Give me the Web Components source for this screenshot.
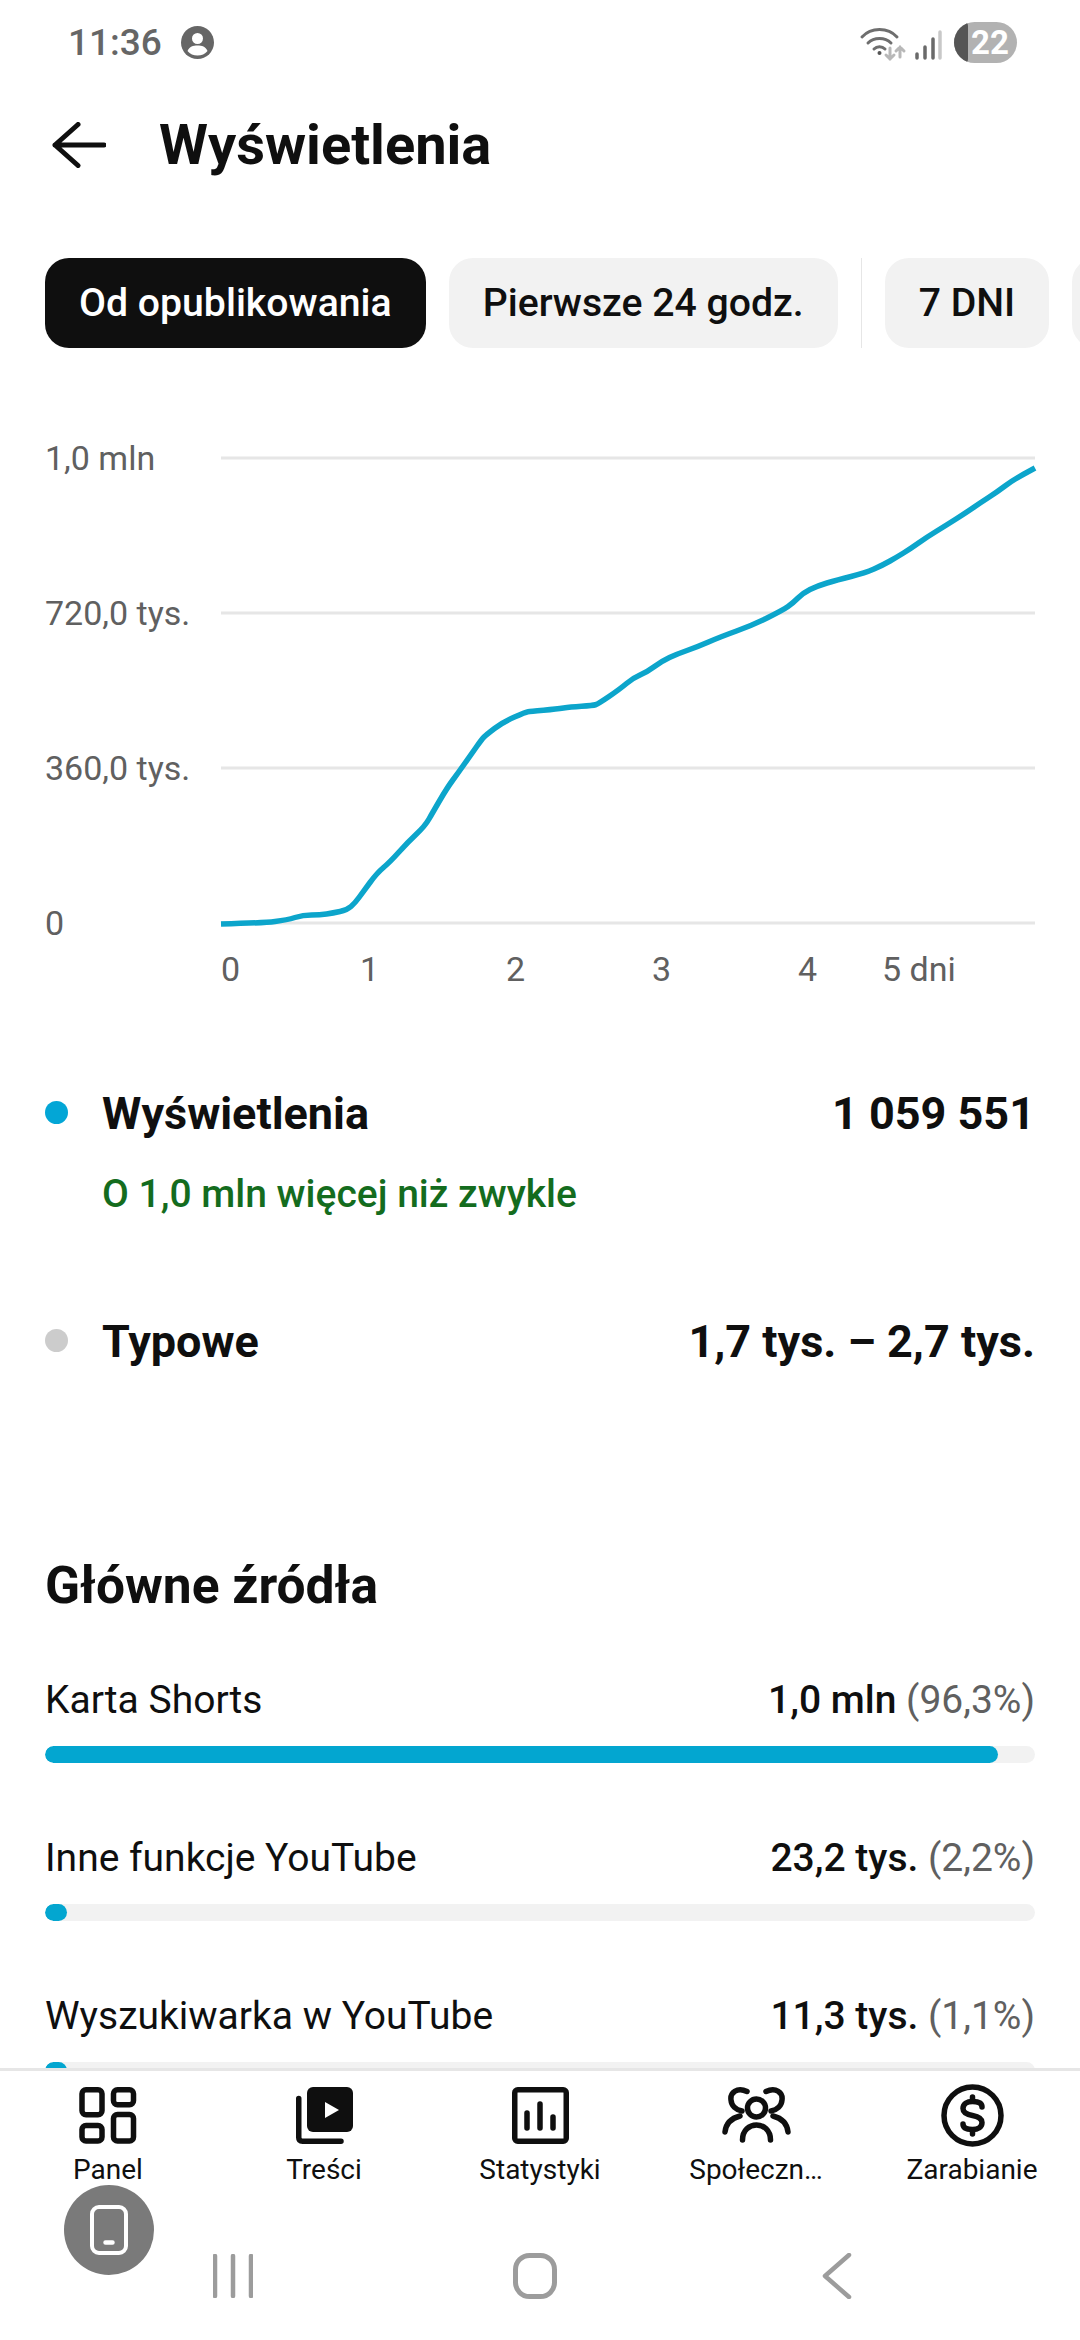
<!DOCTYPE html>
<html lang="pl">
<head>
<meta charset="utf-8">
<title>Wyświetlenia</title>
<style>
  html, body { margin: 0; padding: 0; background: #fff; }
  body { font-family: Roboto, "Noto Sans", sans-serif; color: #0f0f0f; }
</style>
</head>
<body>
<yt-app>
  <status-bar></status-bar>
  <page-header>Wyświetlenia</page-header>
  <chip-row>
    <filter-chip active>Od opublikowania</filter-chip>
    <filter-chip>Pierwsze 24 godz.</filter-chip>
    <chip-divider></chip-divider>
    <filter-chip>7 DNI</filter-chip>
    <filter-chip></filter-chip>
  </chip-row>
  <content-area>
    <views-chart></views-chart>
    <stat-row color="#03a6d6" label="Wyświetlenia" value="1 059 551" style="margin-top:74px">O 1,0 mln więcej niż zwykle</stat-row>
    <stat-row color="#cccccc" label="Typowe" value="1,7 tys. – 2,7 tys." style="margin-top:91px"></stat-row>
    <section-title>Główne źródła</section-title>
    <source-row label="Karta Shorts" value="1,0 mln" share="(96,3%)" fill="96.3"></source-row>
    <source-row label="Inne funkcje YouTube" value="23,2 tys." share="(2,2%)" fill="2.2"></source-row>
    <source-row label="Wyszukiwarka w YouTube" value="11,3 tys." share="(1,1%)" fill="1.1"></source-row>
  </content-area>
  <bottom-nav>
    <nav-item label="Panel">
      <svg width="58" height="57" viewBox="0 0 58 57" fill="none" stroke="#0f0f0f" stroke-width="5.5">
        <rect x="3" y="2.75" width="20" height="25" rx="4"/>
        <rect x="34.5" y="2.75" width="20" height="15" rx="4"/>
        <rect x="3" y="38.5" width="20" height="15.5" rx="4"/>
        <rect x="34.5" y="27.5" width="20" height="26.5" rx="4"/>
      </svg>
    </nav-item>
    <nav-item label="Treści">
      <svg width="57" height="57" viewBox="0 0 57 57" fill="none">
        <rect x="11" y="0" width="46" height="45" rx="6" fill="#0f0f0f"/>
        <path d="M29 15 43 23 29 31Z" fill="#fff"/>
        <path d="M2.75 11.5V50.5q0 3.75 3.75 3.75H45" stroke="#0f0f0f" stroke-width="5.5" stroke-linecap="round"/>
      </svg>
    </nav-item>
    <nav-item label="Statystyki">
      <svg width="57" height="57" viewBox="0 0 57 57" fill="none" stroke="#0f0f0f" stroke-linecap="round">
        <rect x="2.75" y="2.75" width="51.5" height="51.5" rx="3" stroke-width="5.5"/>
        <path d="M15 26V41M28 17V41M41 30V41" stroke-width="5.5"/>
      </svg>
    </nav-item>
    <nav-item label="Społeczn…">
      <svg width="73" height="60" viewBox="0 0 73 60" fill="none" stroke="#0f0f0f" stroke-width="5.5" stroke-linecap="round">
        <circle cx="36.5" cy="23" r="9"/>
        <path d="M22.5 55C22.5 35 50.5 35 50.5 55"/>
        <path d="M5 47C6 38 12 33 20 31M68 47C67 38 61 33 53 31"/>
        <path d="M27 6.5C17 1.5 10 8 11 15 11.5 21 16 25 22 26M46 6.5C56 1.5 63 8 62 15 61.5 21 57 25 51 26"/>
      </svg>
    </nav-item>
    <nav-item label="Zarabianie">
      <svg width="63" height="63" viewBox="0 0 63 63" fill="none" stroke="#0f0f0f" stroke-width="5.5" stroke-linecap="round">
        <circle cx="31.5" cy="31.5" r="28.5"/>
        <path d="M41 23C41 19 37 17.5 31.5 17.5 26 17.5 22 20 22 24.5 22 29 26 30.5 31.5 31.5 37 32.5 41 34 41 38.5 41 43 37 45.5 31.5 45.5 26 45.5 22 44 22 40"/>
        <path d="M31.5 13V17M31.5 46V50"/>
      </svg>
    </nav-item>
  </bottom-nav>
  <system-nav></system-nav>
  <float-button></float-button>
</yt-app>

<script>
class YtApp extends HTMLElement {
  constructor() {
    super();
    this.attachShadow({ mode: 'open' }).innerHTML = `
      <style>
        :host { display: flex; flex-direction: column; position: relative; width: 1080px; height: 2340px; overflow: hidden; background: #fff; }
      </style>
      <slot></slot>`;
  }
}

class StatusBar extends HTMLElement {
  constructor() {
    super();
    this.attachShadow({ mode: 'open' }).innerHTML = `
      <style>
        :host { display: flex; align-items: center; height: 84px; padding: 0 63px 0 68px; color: #666; font-size: 37px; font-weight: 500; flex: none; }
        .avatar { margin-left: 19px; }
        .signal { margin-left: auto; }
        .battery { position: relative; overflow: hidden; width: 63px; height: 41px; margin-left: 9px; border-radius: 21px; background: #b2b2b2; color: #fff; font-size: 33px; font-weight: 700; line-height: 41px; text-align: center; text-indent: 9px; }
        .battery::before { content: ''; position: absolute; left: 0; top: 0; width: 14px; height: 41px; background: #555; border-radius: 0 4px 4px 0; }
      </style>
      <span>11:36</span>
      <svg class="avatar" width="33" height="33" viewBox="0 0 33 33">
        <circle cx="16.5" cy="16.5" r="16.5" fill="#666"/>
        <circle cx="16.5" cy="12.5" r="5.5" fill="#fff"/>
        <path d="M6.5 25C8.5 20.5 12 19.5 16.5 19.5S24.5 20.5 26.5 25C24 28 20.5 29.5 16.5 29.5S9 28 6.5 25Z" fill="#fff"/>
      </svg>
      <svg class="signal" width="88" height="40" viewBox="855 20 88 40" fill="none" stroke-linecap="round">
        <path d="M860 35C869 25 886 25 895 35M866 41C872 35 883 35 889 41M872 47C875 44 880 44 883 47" stroke="#6e6e6e" stroke-width="3"/>
        <circle cx="877.5" cy="51" r="2" fill="#555"/>
        <path d="M888 46V57M884 53 888 57 892 53" stroke="#b8b8b8" stroke-width="3"/>
        <path d="M898 55V45M894 49 898 45 902 49" stroke="#b8b8b8" stroke-width="3"/>
        <path d="M915 52V56M923 45V56M931 37V56" stroke="#6a6a6a" stroke-width="3.5"/>
        <path d="M938 30V56" stroke="#c8c8c8" stroke-width="3.5"/>
      </svg>
      <span class="battery">22</span>`;
  }
}

class PageHeader extends HTMLElement {
  constructor() {
    super();
    this.attachShadow({ mode: 'open' }).innerHTML = `
      <style>
        :host { display: flex; align-items: center; height: 122px; padding-left: 52px; flex: none; }
        svg { flex: none; }
        h1 { margin: 0 0 0 53px; font-size: 56px; font-weight: 700; line-height: 60px; }
      </style>
      <svg width="54" height="46" viewBox="0 0 54 46" fill="none" stroke="#0f0f0f" stroke-width="5" stroke-linecap="round" stroke-linejoin="round">
        <path d="M26 2.5 3 23 26 43.5M3 23H52"/>
      </svg>
      <h1><slot></slot></h1>`;
  }
}

class ChipRow extends HTMLElement {
  constructor() {
    super();
    this.attachShadow({ mode: 'open' }).innerHTML = `
      <style>
        :host { display: flex; align-items: stretch; gap: 23px; height: 90px; margin-top: 52px; padding-left: 45px; overflow: hidden; flex: none; }
      </style>
      <slot></slot>`;
  }
}

class FilterChip extends HTMLElement {
  constructor() {
    super();
    this.attachShadow({ mode: 'open' }).innerHTML = `
      <style>
        :host { display: flex; align-items: center; flex: none; min-width: 100px; padding: 0 34px; box-sizing: border-box; border-radius: 24px; background: #f2f2f2; color: #0f0f0f; font-size: 39.2px; font-weight: 500; }
        :host([active]) { background: #0f0f0f; color: #fff; }
      </style>
      <slot></slot>`;
  }
}

class ChipDivider extends HTMLElement {
  constructor() {
    super();
    this.attachShadow({ mode: 'open' }).innerHTML = `
      <style>
        :host { display: block; flex: none; width: 1px; background: #e6e6e6; }
      </style>`;
  }
}

class ContentArea extends HTMLElement {
  constructor() {
    super();
    this.attachShadow({ mode: 'open' }).innerHTML = `
      <style>
        :host { display: block; flex: 1; min-height: 0; overflow: hidden; }
      </style>
      <slot></slot>`;
  }
}

// traced off the reference, in page pixels
const curve = [[221,924],[263,923],[287,920],[303,915],[320,915],[333,913],[347,910],[355,903],[363,892],[377,873],[390,862],[408,842],[425,826],[433,812],[447,788],[458,773],[470,756],[482,739],[486,735],[503,722],[526,712],[530,711.5],[557,709],[570,707],[593,705.5],[598,704],[620,689],[633,678],[647,672],[662,661],[677,654],[697,647],[720,637],[753,625],[783,610],[793,603],[803,593],[817,586],[837,580],[865,573],[883,565],[897,557],[910,549],[927,537],[945,526],[967,512],[980,503],[997,492],[1013,480],[1035,468]];

// quadratic through the midpoints, so the trace doesn't look faceted
function smoothPath(points) {
  let d = `M${points[0][0]} ${points[0][1]}`;
  for (let i = 1; i < points.length - 1; i++) {
    const mx = (points[i][0] + points[i + 1][0]) / 2;
    const my = (points[i][1] + points[i + 1][1]) / 2;
    d += `Q${points[i][0]} ${points[i][1]} ${mx} ${my}`;
  }
  const last = points[points.length - 1];
  return `${d}L${last[0]} ${last[1]}`;
}

class ViewsChart extends HTMLElement {
  constructor() {
    super();
    const top = 348;
    const grid = [458, 613, 768, 923];
    const yLabels = ['1,0 mln', '720,0 tys.', '360,0 tys.', '0'];
    const xLabels = [[221, '0'], [360, '1'], [506, '2'], [652, '3'], [798, '4'], [882, '5 dni']];
    const lines = grid.map(y => `<line x1="221" x2="1035" y1="${y}" y2="${y}"/>`).join('');
    const ys = grid.map((y, i) => `<text x="45" y="${y + 12}">${yLabels[i]}</text>`).join('');
    const xs = xLabels.map(([x, t]) => `<text x="${x}" y="981">${t}</text>`).join('');
    this.attachShadow({ mode: 'open' }).innerHTML = `
      <style>
        :host { display: block; height: 660px; }
        svg { display: block; }
        line { stroke: #e6e6e6; stroke-width: 3; }
        text { font-size: 34px; fill: #606060; }
        .trace { fill: none; stroke: #0ca5cb; stroke-width: 5.5; stroke-linejoin: round; }
      </style>
      <svg width="1080" height="660" viewBox="0 ${top} 1080 660">
        ${lines}${ys}${xs}
        <path class="trace" d="${smoothPath(curve)}"/>
      </svg>`;
  }
}

class StatRow extends HTMLElement {
  constructor() {
    super();
    this.attachShadow({ mode: 'open' }).innerHTML = `
      <style>
        :host { display: grid; grid-template-columns: 57px 1fr auto; align-items: start; padding: 0 45px; font-size: 45px; font-weight: 700; }
        .dot { width: 23px; height: 23px; margin-top: 18.5px; border-radius: 50%; background: ${this.getAttribute('color')}; }
        .txt { margin-top: 3px; line-height: 57px; }
        .note { grid-column: 2 / 4; margin-top: 27px; color: #146c1e; font-size: 39px; font-weight: 500; line-height: 50px; }
      </style>
      <span class="dot"></span>
      <span class="txt">${this.getAttribute('label')}</span>
      <span class="txt">${this.getAttribute('value')}</span>
      ${this.textContent.trim() ? '<span class="note"><slot></slot></span>' : ''}`;
  }
}

class SectionTitle extends HTMLElement {
  constructor() {
    super();
    this.attachShadow({ mode: 'open' }).innerHTML = `
      <style>
        :host { display: block; margin: 186px 45px 59px; font-size: 51.5px; font-weight: 700; line-height: 60px; }
      </style>
      <slot></slot>`;
  }
}

class SourceRow extends HTMLElement {
  constructor() {
    super();
    this.attachShadow({ mode: 'open' }).innerHTML = `
      <style>
        :host { display: block; margin: 0 45px 70px; font-size: 39px; line-height: 50px; }
        .top { display: flex; justify-content: space-between; }
        b { font-weight: 500; }
        i { font-style: normal; color: #606060; }
        .track { height: 17px; margin-top: 21px; border-radius: 9px; background: #f2f2f2; overflow: hidden; }
        .fill { height: 100%; min-width: 22px; width: ${this.getAttribute('fill')}%; border-radius: 9px; background: #03a6d0; }
      </style>
      <div class="top">
        <span>${this.getAttribute('label')}</span>
        <span><b>${this.getAttribute('value')}</b> <i>${this.getAttribute('share')}</i></span>
      </div>
      <div class="track"><div class="fill"></div></div>`;
  }
}

class BottomNav extends HTMLElement {
  constructor() {
    super();
    this.attachShadow({ mode: 'open' }).innerHTML = `
      <style>
        :host { display: grid; grid-template-columns: repeat(5, 1fr); flex: none; padding: 11px 0 0; border-top: 3px solid #e6e6e6; background: #fff; }
      </style>
      <slot></slot>`;
  }
}

class NavItem extends HTMLElement {
  constructor() {
    super();
    this.attachShadow({ mode: 'open' }).innerHTML = `
      <style>
        :host { display: flex; flex-direction: column; align-items: center; }
        .icon { display: flex; align-items: center; justify-content: center; height: 66px; }
        .label { margin-top: 4px; font-size: 28px; line-height: 36px; white-space: nowrap; }
      </style>
      <div class="icon"><slot></slot></div>
      <div class="label">${this.getAttribute('label')}</div>`;
  }
}

class SystemNav extends HTMLElement {
  constructor() {
    super();
    this.attachShadow({ mode: 'open' }).innerHTML = `
      <style>
        :host { display: grid; grid-template-columns: repeat(3, 302px); justify-content: center; align-items: center; flex: none; height: 152px; padding: 24px 10px 0 0; box-sizing: border-box; }
        svg { justify-self: center; }
      </style>
      <svg width="40" height="44" viewBox="0 0 40 44" fill="none" stroke="#9c9c9c" stroke-width="4.5" stroke-linecap="round">
        <path d="M2 2V42M20 2V42M38 2V42"/>
      </svg>
      <svg width="44" height="46" viewBox="0 0 44 46" fill="none" stroke="#9c9c9c" stroke-width="5">
        <rect x="2.5" y="2.5" width="39" height="41" rx="14"/>
      </svg>
      <svg width="30" height="46" viewBox="0 0 30 46" fill="none" stroke="#9c9c9c" stroke-width="4.5" stroke-linecap="round" stroke-linejoin="round">
        <path d="M27 2 3 23 27 44"/>
      </svg>`;
  }
}

class FloatButton extends HTMLElement {
  constructor() {
    super();
    this.attachShadow({ mode: 'open' }).innerHTML = `
      <style>
        :host { position: absolute; left: 64px; top: 2185px; width: 90px; height: 90px; border-radius: 50%; background: #7a7a7a; display: flex; align-items: center; justify-content: center; }
      </style>
      <svg width="38" height="50" viewBox="0 0 38 50" fill="none" stroke="#fff">
        <rect x="2" y="2" width="34" height="46" rx="7" stroke-width="4"/>
        <rect x="14" y="36" width="10" height="3" rx="1.5" fill="#fff" stroke-width="1.5"/>
      </svg>`;
  }
}

customElements.define('yt-app', YtApp);
customElements.define('status-bar', StatusBar);
customElements.define('page-header', PageHeader);
customElements.define('chip-row', ChipRow);
customElements.define('filter-chip', FilterChip);
customElements.define('chip-divider', ChipDivider);
customElements.define('content-area', ContentArea);
customElements.define('views-chart', ViewsChart);
customElements.define('stat-row', StatRow);
customElements.define('section-title', SectionTitle);
customElements.define('source-row', SourceRow);
customElements.define('bottom-nav', BottomNav);
customElements.define('nav-item', NavItem);
customElements.define('system-nav', SystemNav);
customElements.define('float-button', FloatButton);
</script>
</body>
</html>
